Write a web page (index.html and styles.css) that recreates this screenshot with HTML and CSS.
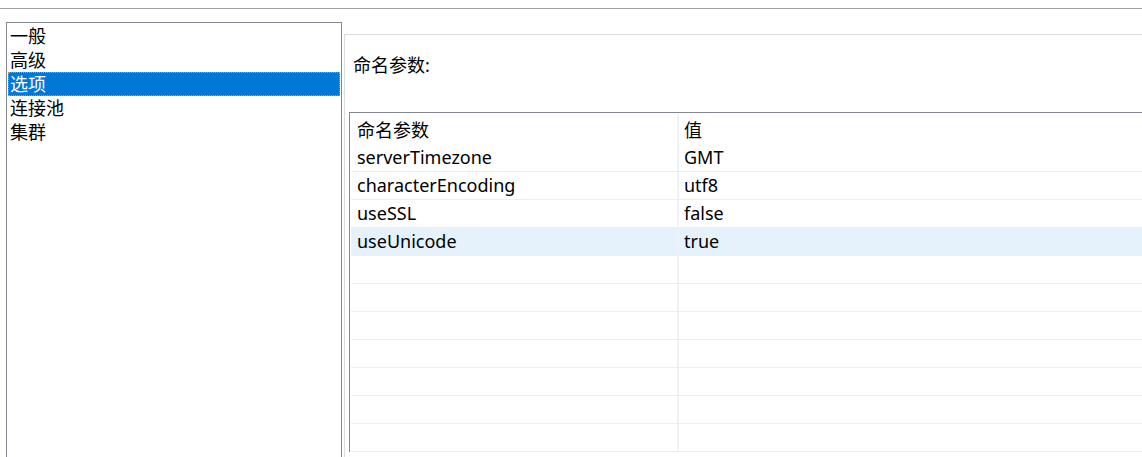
FILE: index.html
```html
<!DOCTYPE html>
<html lang="zh">
<head>
<meta charset="utf-8">
<title>选项</title>
<link rel="stylesheet" href="styles.css">
</head>
<body>
<div class="topbar"></div>
<div class="main">
  <div class="list">
    <div class="item">一般</div>
    <div class="item">高级</div>
    <div class="item selected">选项</div>
    <div class="item">连接池</div>
    <div class="item">集群</div>
  </div>
  <div class="panel">
    <div class="label">命名参数:</div>
    <div class="grid">
      <div class="row head">
        <div class="cell name">命名参数</div>
        <div class="cell value">值</div>
      </div>
      <div class="row">
        <div class="cell name">serverTimezone</div>
        <div class="cell value">GMT</div>
      </div>
      <div class="row">
        <div class="cell name">characterEncoding</div>
        <div class="cell value">utf8</div>
      </div>
      <div class="row">
        <div class="cell name">useSSL</div>
        <div class="cell value">false</div>
      </div>
      <div class="row active">
        <div class="cell name">useUnicode</div>
        <div class="cell value">true</div>
      </div>
      <div class="row"><div class="cell name"></div><div class="cell value"></div></div>
      <div class="row"><div class="cell name"></div><div class="cell value"></div></div>
      <div class="row"><div class="cell name"></div><div class="cell value"></div></div>
      <div class="row"><div class="cell name"></div><div class="cell value"></div></div>
      <div class="row"><div class="cell name"></div><div class="cell value"></div></div>
      <div class="row"><div class="cell name"></div><div class="cell value"></div></div>
      <div class="row"><div class="cell name"></div><div class="cell value"></div></div>
    </div>
  </div>
</div>
</body>
</html>
```

FILE: styles.css
```css
html, body {
  margin: 0;
  padding: 0;
  background: #ffffff;
  overflow: hidden;
}
body {
  width: 1142px;
  height: 457px;
  font-family: "Noto Sans", "Noto Sans CJK SC", sans-serif;
  font-size: 18px;
  color: #000000;
}
.topbar {
  height: 8px;
  border-bottom: 1px solid #a0a0a0;
}
.main {
  display: flex;
  align-items: flex-start;
  padding-left: 6px;
  margin-top: 13px;
  height: 435px;
  overflow: hidden;
}
.list {
  width: 332px;
  height: 433px;
  flex: none;
  border: 1px solid #828790;
  border-bottom: none;
  padding: 1px 1px 0 1px;
  box-sizing: content-box;
}
.item {
  height: 24px;
  line-height: 24px;
  padding-left: 2px;
  white-space: nowrap;
}
.item.selected {
  background: #0078d7;
  color: #ffffff;
  outline: 1px dotted #f0902a;
  outline-offset: -1px;
}
.panel {
  flex: 1;
  margin-left: 2px;
  margin-top: 12px;
  height: 422px;
  overflow: hidden;
  border-top: 1px solid #dcdcdc;
  border-left: 1px solid #dcdcdc;
}
.label {
  padding: 18px 0 0 8px;
  height: 24px;
  line-height: 24px;
}
.grid {
  margin: 35px 0 0 4px;
  border-top: 1px solid #828790;
  border-left: 1px solid #828790;
  padding-left: 1px;
}
.row {
  display: flex;
  height: 27px;
  border-bottom: 1px solid #eeeeee;
}
.row.head {
  height: 31px;
  border-bottom: none;
}
.row.active {
  background: #e5f1fb;
}
.cell {
  line-height: 27px;
  white-space: nowrap;
}
.cell.name {
  width: 320px;
  flex: none;
  padding-left: 6px;
  border-right: 2px solid #eef1f5;
}
.head .cell.name {
  margin-top: 1px;
  line-height: 32px;
}
.head .cell.value {
  line-height: 34px;
}
.cell.value {
  flex: 1;
  padding-left: 5px;
}
```
